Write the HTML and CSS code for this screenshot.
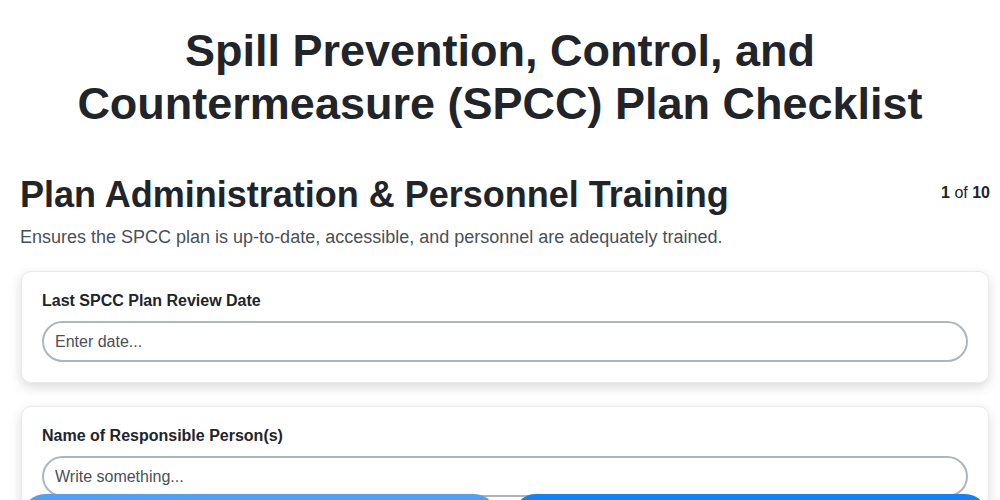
FILE: index.html
```html
<!DOCTYPE html>
<html lang="en">
<head>
    <meta charset="UTF-8">
    <meta name="viewport" content="width=device-width, initial-scale=1.0">
    <title>SPCC Plan Checklist</title>
    <link rel="stylesheet" href="styles.css">
</head>
<body>
    <h1 class="page-title">Spill Prevention, Control, and Countermeasure (SPCC) Plan Checklist</h1>

    <div class="section">
        <div class="section-head">
            <h2>Plan Administration &amp; Personnel Training</h2>
            <div class="counter"><b>1</b> of <b>10</b></div>
        </div>
        <p class="section-desc">Ensures the SPCC plan is up-to-date, accessible, and personnel are adequately trained.</p>

        <div class="card">
            <label class="field-label">Last SPCC Plan Review Date</label>
            <input class="field-input" type="text" placeholder="Enter date...">
        </div>

        <div class="card">
            <label class="field-label">Name of Responsible Person(s)</label>
            <input class="field-input" type="text" placeholder="Write something...">
        </div>

        <div class="card">
            <label class="field-label">Date of Last Personnel Training</label>
            <input class="field-input" type="text" placeholder="Enter date...">
        </div>
    </div>

    <div class="nav-buttons">
        <button class="btn btn-prev" disabled>Previous</button>
        <button class="btn btn-next">Next</button>
    </div>
</body>
</html>
```

FILE: styles.css
```css
* {
    margin: 0;
    padding: 0;
    box-sizing: border-box;
    font-family: 'Liberation Sans', Arial, sans-serif;
}

body {
    background-color: #fff;
    color: #212529;
}

.page-title {
    text-align: center;
    font-size: 45px;
    line-height: 53px;
    font-weight: 700;
    padding: 24px 60px 0;
}

.section {
    padding: 0 10px 120px 20px;
}

.section-head {
    display: flex;
    justify-content: space-between;
    align-items: flex-start;
    margin-top: 43px;
}

.section-head h2 {
    font-size: 36px;
    line-height: 43px;
    font-weight: 700;
}

.counter {
    font-size: 16px;
    margin-top: 11px;
}

.section-desc {
    font-size: 18px;
    color: #495057;
    margin-top: 11px;
    margin-bottom: 23px;
}

.card {
    background-color: white;
    border: 1px solid #e9ecef;
    border-radius: 10px;
    box-shadow: 0 4px 12px rgba(0, 0, 0, 0.15);
    padding: 19px 20px 20px;
    margin: 0 1px 23px;
}

.field-label {
    display: block;
    font-size: 16px;
    font-weight: 700;
    line-height: 20px;
    margin-bottom: 10px;
}

.field-input {
    width: 100%;
    height: 41px;
    border: 2px solid #adb5bd;
    border-radius: 21px;
    padding: 0 11px;
    font-size: 16px;
    color: #212529;
    outline: none;
}

.field-input::placeholder {
    color: #495057;
}

.nav-buttons {
    position: fixed;
    left: 22px;
    right: 12px;
    bottom: -40px;
    display: flex;
    gap: 16px;
}

.btn {
    flex: 1;
    height: 46px;
    border: none;
    border-radius: 23px;
    color: white;
    font-size: 16px;
    font-weight: 700;
    background-color: #0a84ff;
}

.btn-prev {
    background-color: #4ea1f8;
}
```
